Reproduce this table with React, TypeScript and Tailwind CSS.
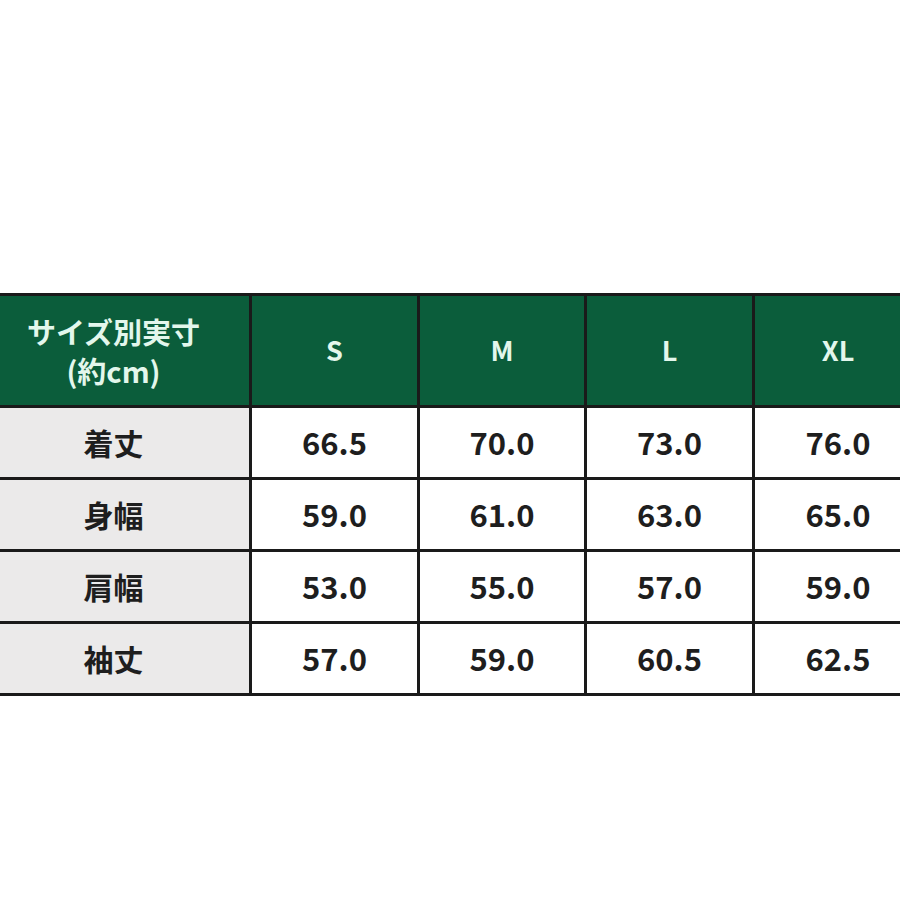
import React from "react";

const sizes = ["S", "M", "L", "XL"];
const rows: { label: string; values: string[] }[] = [
  { label: "着丈", values: ["66.5", "70.0", "73.0", "76.0"] },
  { label: "身幅", values: ["59.0", "61.0", "63.0", "65.0"] },
  { label: "肩幅", values: ["53.0", "55.0", "57.0", "59.0"] },
  { label: "袖丈", values: ["57.0", "59.0", "60.5", "62.5"] },
];

export default function App() {
  return (
    <div
      className="w-[900px] h-[900px] bg-white overflow-hidden"
      style={{ fontFamily: '"Noto Sans CJK JP", "Noto Sans", sans-serif' }}
    >
      <div className="pt-[293px] -ml-[22px]">
        <div className="grid grid-cols-[271px_165px_164px_165px_166px] gap-[3px] bg-[#1a1a1a] py-[3px] w-[945px]">
          <div className="h-[109px] bg-[#0b5d3b] text-[#e3f7ec] font-bold flex flex-col items-center justify-center text-[29px] leading-[39px]">
            <span>サイズ別実寸</span>
            <span>(約cm)</span>
          </div>
          {sizes.map((s) => (
            <div
              key={s}
              className="h-[109px] bg-[#0b5d3b] text-[#e3f7ec] font-bold flex items-center justify-center text-[27px]"
            >
              {s}
            </div>
          ))}
          {rows.map((r) => (
            <React.Fragment key={r.label}>
              <div className="h-[69px] bg-[#ebeaea] text-[#1e1e1e] font-bold flex items-center justify-center text-[30px]">
                {r.label}
              </div>
              {r.values.map((v, i) => (
                <div
                  key={i}
                  className="h-[69px] bg-white text-[#1e1e1e] font-bold flex items-center justify-center text-[31px]"
                >
                  {v}
                </div>
              ))}
            </React.Fragment>
          ))}
        </div>
      </div>
    </div>
  );
}
